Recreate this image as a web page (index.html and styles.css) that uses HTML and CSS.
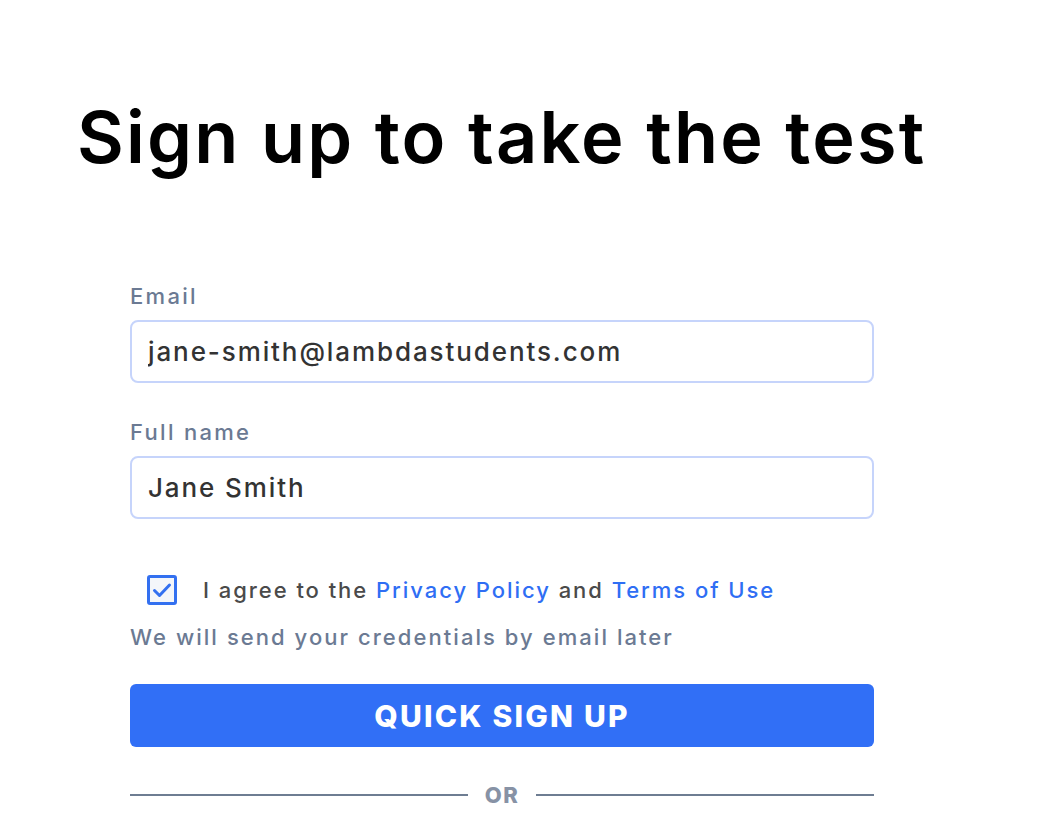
FILE: index.html
```html
<!DOCTYPE html>
<html lang="en">
<head>
<meta charset="utf-8">
<title>Sign up</title>
<link rel="stylesheet" href="styles.css">
</head>
<body>
<main class="page">
  <h1 class="title">Sign up to take the test</h1>
  <form class="form">
    <label class="field">
      <span class="label">Email</span>
      <input class="input" type="text" value="jane-smith@lambdastudents.com">
    </label>
    <label class="field field-second">
      <span class="label">Full name</span>
      <input class="input" type="text" value="Jane Smith">
    </label>
    <div class="agree">
      <span class="checkbox">
        <svg viewBox="0 0 24 24" width="24" height="24"><path d="M4.5 12.5l5 5L19.5 7" fill="none" stroke="#3370f0" stroke-width="3" stroke-linecap="round" stroke-linejoin="round"/></svg>
      </span>
      <span class="agree-text">I agree to the <a class="link" href="#">Privacy Policy</a> and <a class="link" href="#">Terms of Use</a></span>
    </div>
    <p class="note">We will send your credentials by email later</p>
    <button class="button" type="button">QUICK SIGN UP</button>
    <div class="divider">
      <span class="line"></span>
      <span class="or">OR</span>
      <span class="line"></span>
    </div>
  </form>
</main>
</body>
</html>
```
FILE: styles.css
```css
* { box-sizing: border-box; }
html, body {
  margin: 0;
  padding: 0;
  background: #ffffff;
}
body {
  font-family: Inter, "Noto Sans", sans-serif;
  color: #333;
}
.page {
  padding-top: 94px;
  padding-left: 77px;
}
.title {
  margin: 0;
  font-size: 72px;
  line-height: 86px;
  font-weight: 600;
  letter-spacing: 2.2px;
  color: #000;
}
.form {
  margin: 103px 0 0 53px;
  width: 744px;
  display: flex;
  flex-direction: column;
}
.field {
  display: flex;
  flex-direction: column;
  gap: 11px;
}
.field-second { margin-top: 36px; }
.label {
  font-size: 22px;
  line-height: 26px;
  font-weight: 500;
  letter-spacing: 2.3px;
  color: #6b7a93;
}
.input {
  height: 63px;
  width: 100%;
  border: 2px solid #c6d4fb;
  border-radius: 8px;
  padding: 0 16px;
  font-family: Inter, "Noto Sans", sans-serif;
  font-size: 26px;
  font-weight: 500;
  letter-spacing: 1.9px;
  color: #333;
  outline: none;
  background: #fff;
}
.agree {
  margin-top: 56px;
  display: flex;
  align-items: center;
  gap: 26px;
  padding-left: 17px;
}
.checkbox {
  width: 30px;
  height: 30px;
  border: 3px solid #3370f0;
  border-radius: 3px;
  background: #f4f6fa;
  display: flex;
  align-items: center;
  justify-content: center;
}
.agree-text {
  font-size: 22px;
  line-height: 26px;
  font-weight: 500;
  letter-spacing: 1.95px;
  color: #4a4a4a;
}
.link {
  color: #2f6ef4;
  text-decoration: none;
}
.note {
  margin: 19px 0 0;
  font-size: 22px;
  line-height: 26px;
  font-weight: 500;
  letter-spacing: 2.05px;
  color: #6b7a93;
}
.button {
  margin-top: 34px;
  height: 63px;
  width: 100%;
  border: 0;
  border-radius: 6px;
  background: #316ff6;
  color: #fff;
  font-family: Inter, "Noto Sans", sans-serif;
  font-size: 30px;
  font-weight: 800;
  letter-spacing: 2.2px;
  cursor: pointer;
}
.divider {
  margin-top: 35px;
  display: flex;
  align-items: center;
  gap: 17px;
}
.line {
  flex: 1;
  height: 2px;
  background: #6e7d92;
}
.or {
  font-size: 22px;
  line-height: 26px;
  font-weight: 800;
  color: #8792a5;
  letter-spacing: 1.5px;
}
```
